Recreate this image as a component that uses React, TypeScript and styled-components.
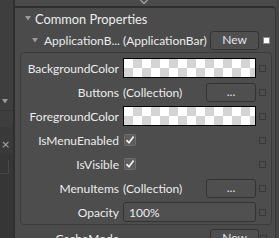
import styled, { createGlobalStyle } from "styled-components";

const GlobalStyle = createGlobalStyle`
  * { box-sizing: border-box; }
  html, body { margin: 0; padding: 0; background: #4b4b4b; }
  body {
    font-family: Lato, "Open Sans", sans-serif;
    font-size: 12px;
    color: #ececec;
  }
`;

interface Row {
  label: string;
  kind: "color" | "collection" | "check" | "text";
  value?: string;
}

const rows: Row[] = [
  { label: "BackgroundColor", kind: "color" },
  { label: "Buttons", kind: "collection" },
  { label: "ForegroundColor", kind: "color" },
  { label: "IsMenuEnabled", kind: "check" },
  { label: "IsVisible", kind: "check" },
  { label: "MenuItems", kind: "collection" },
  { label: "Opacity", kind: "text", value: "100%" },
];

const Triangle = () => (
  <svg width="6" height="5" viewBox="0 0 6 5">
    <polygon points="0,0 6,0 3,4.5" fill="#9a9a9a" />
  </svg>
);

const Check = () => (
  <svg width="12" height="12" viewBox="0 0 12 12">
    <rect x="0.5" y="0.5" width="11" height="11" rx="1" fill="#5c5c5c" stroke="#6e6e6e" />
    <polyline points="2.5,6.2 5,8.8 9.6,2.6" fill="none" stroke="#f2f2f2" strokeWidth="1.7" />
  </svg>
);

const App = () => {
  return (
    <>
      <GlobalStyle />
      <Page>
        <SideStrip>
          <SideBox>
            <Triangle />
            <SideLine />
          </SideBox>
          <SideClose>×</SideClose>
          <SideInput>
            <SideField />
          </SideInput>
        </SideStrip>
        <Main>
          <TopBar>
            <svg width="8" height="5" viewBox="0 0 8 5">
              <polyline points="0.5,0 4,3.5 7.5,0" fill="none" stroke="#9c9c9c" strokeWidth="1.4" />
            </svg>
          </TopBar>
          <Panel>
            <CategoryHeader>
              <Triangle />
              <span>Common Properties</span>
            </CategoryHeader>
            <ObjectRow>
              <ObjectName>
                <Triangle />
                <span>ApplicationB... (ApplicationBar)</span>
              </ObjectName>
              <Button $width={49}>New</Button>
              <Marker $filled />
            </ObjectRow>
            <Group>
              {rows.map((row) => (
                <PropRow key={row.label}>
                  <Label>{row.label}</Label>
                  <Value>
                    {row.kind === "color" && <Swatch />}
                    {row.kind === "collection" && (
                      <>
                        <span>(Collection)</span>
                        <Button $width={50}>...</Button>
                      </>
                    )}
                    {row.kind === "check" && <Check />}
                    {row.kind === "text" && <TextBox>{row.value}</TextBox>}
                  </Value>
                  <Marker />
                </PropRow>
              ))}
            </Group>
            <OuterRow>
              <OuterLabel>CacheMode</OuterLabel>
              <Button $width={49}>New</Button>
              <Marker />
            </OuterRow>
          </Panel>
        </Main>
        <RightEdge />
      </Page>
    </>
  );
};

const Page = styled.div`
  width: 279px;
  height: 238px;
  display: flex;
  overflow: hidden;
  background: #4b4b4b;
`;

const SideStrip = styled.div`
  width: 15px;
  flex-shrink: 0;
  display: flex;
  flex-direction: column;
  background: #393939;
  border-right: 2px solid #2f2f2f;
`;

const SideBox = styled.div`
  height: 127px;
  padding-top: 99px;
  display: flex;
  flex-direction: column;
  align-items: flex-start;
  background: #3e3e3e;
  border-bottom-right-radius: 3px;

  svg {
    margin-left: 2px;
  }
`;

const SideLine = styled.div`
  margin-top: 6px;
  height: 1px;
  align-self: stretch;
  background: #343434;
`;

const SideClose = styled.div`
  margin-top: 9px;
  padding-left: 1px;
  height: 18px;
  font-family: "DejaVu Sans", sans-serif;
  font-size: 11px;
  line-height: 18px;
  color: #a8a8a8;
`;

const SideInput = styled.div`
  flex: 1;
  padding: 6px 4px 0 0;
  background: #363636;
  border-top-right-radius: 3px;
`;

const SideField = styled.div`
  height: 14px;
  border-right: 1px solid #4a4a4a;
  border-bottom: 1px solid #444;
`;

const Main = styled.div`
  flex: 1;
  display: flex;
  flex-direction: column;
`;

const TopBar = styled.div`
  height: 6px;
  flex-shrink: 0;
  padding-left: 125px;
  display: flex;
  align-items: flex-start;
  background: #4a4a4a;
`;

const Panel = styled.div`
  flex: 1;
  display: flex;
  flex-direction: column;
  background: #4b4b4b;
  border-top: 2px solid #2e2e2e;
  border-right: 1px solid #343434;
  border-top-right-radius: 4px;
`;

const CategoryHeader = styled.div`
  height: 21px;
  display: flex;
  align-items: center;
  gap: 4px;
  padding-left: 10px;
  font-size: 12.8px;
  color: #ededed;
`;

const ObjectRow = styled.div`
  height: 22px;
  display: flex;
  align-items: center;
`;

const ObjectName = styled.div`
  width: 195px;
  display: flex;
  align-items: center;
  gap: 6px;
  padding-left: 17px;
  white-space: nowrap;
  overflow: hidden;

  svg {
    flex-shrink: 0;
  }
`;

const Group = styled.div`
  margin: 1px 3px 0 5px;
  padding: 3px 0 0;
  height: 173px;
  border: 1px solid #3b3b3b;
  border-radius: 4px;
  background: #4d4d4d;
`;

const PropRow = styled.div`
  height: 24px;
  display: grid;
  grid-template-columns: 100px 133px 1fr;
  column-gap: 2px;
  align-items: center;
`;

const Label = styled.div`
  text-align: right;
  padding-right: 2px;
  white-space: nowrap;
`;

const Value = styled.div`
  display: flex;
  align-items: center;
  justify-content: space-between;
  white-space: nowrap;

  svg {
    margin-left: 1px;
  }
`;

const Swatch = styled.div`
  width: 133px;
  height: 20px;
  border: 1px solid #000;
  background-color: #fff;
  background-image: conic-gradient(#d4d4d4 25%, #fff 0 50%, #d4d4d4 0 75%, #fff 0);
  background-size: 18px 18px;
`;

const Button = styled.div<{ $width: number }>`
  width: ${(p) => p.$width}px;
  height: 19px;
  flex-shrink: 0;
  display: flex;
  align-items: center;
  justify-content: center;
  border: 1px solid #333;
  border-radius: 3px;
  background: #4f4f4f;
  color: #e4e4f0;
  line-height: 1;
`;

const TextBox = styled.div`
  width: 133px;
  height: 20px;
  padding-left: 5px;
  display: flex;
  align-items: center;
  border: 1px solid #333;
  border-radius: 3px;
  background: #505050;
`;

const Marker = styled.div<{ $filled?: boolean }>`
  width: 7px;
  height: 7px;
  flex-shrink: 0;
  margin-left: ${(p) => (p.$filled ? "4px" : "1px")};
  border: 1px solid ${(p) => (p.$filled ? "#8a8a8a" : "#3a3a3a")};
  background: ${(p) => (p.$filled ? "#fff" : "transparent")};
`;

const OuterRow = styled.div`
  height: 22px;
  margin-top: 2px;
  display: flex;
  align-items: center;
`;

const OuterLabel = styled.div`
  width: 195px;
  padding-right: 91px;
  text-align: right;
`;

const RightEdge = styled.div`
  width: 3px;
  flex-shrink: 0;
  background: #454545;
`;

export default App;
